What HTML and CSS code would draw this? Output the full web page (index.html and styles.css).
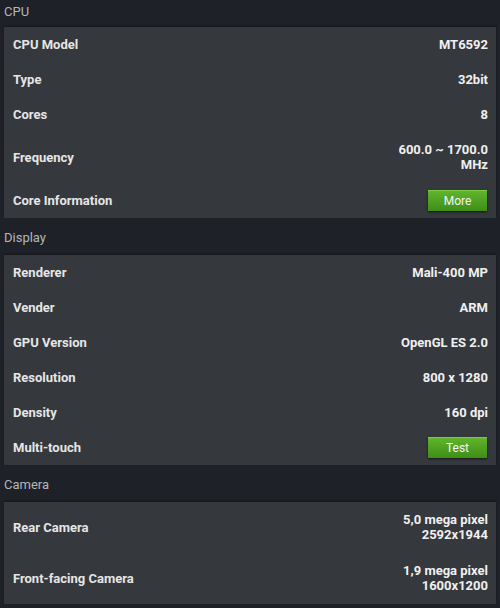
FILE: index.html
```html
<!DOCTYPE html>
<html>
<head>
<meta charset="utf-8">
<link rel="stylesheet" href="styles.css">
</head>
<body>
<div class="page">
  <div class="section-title first">CPU</div>
  <div class="card">
    <div class="row"><span class="label">CPU Model</span><span class="value">MT6592</span></div>
    <div class="row"><span class="label">Type</span><span class="value">32bit</span></div>
    <div class="row"><span class="label">Cores</span><span class="value">8</span></div>
    <div class="row tall"><span class="label">Frequency</span><span class="value">600.0 ~ 1700.0<br>MHz</span></div>
    <div class="row btnrow"><span class="label">Core Information</span><span class="btn">More</span></div>
  </div>
  <div class="section-title">Display</div>
  <div class="card">
    <div class="row"><span class="label">Renderer</span><span class="value">Mali-400 MP</span></div>
    <div class="row"><span class="label">Vender</span><span class="value">ARM</span></div>
    <div class="row"><span class="label">GPU Version</span><span class="value">OpenGL ES 2.0</span></div>
    <div class="row"><span class="label">Resolution</span><span class="value">800 x 1280</span></div>
    <div class="row"><span class="label">Density</span><span class="value">160 dpi</span></div>
    <div class="row"><span class="label">Multi-touch</span><span class="btn">Test</span></div>
  </div>
  <div class="section-title">Camera</div>
  <div class="card">
    <div class="row tall"><span class="label">Rear Camera</span><span class="value">5,0 mega pixel<br>2592x1944</span></div>
    <div class="row tall last"><span class="label">Front-facing Camera</span><span class="value">1,9 mega pixel<br>1600x1200</span></div>
  </div>
</div>
</body>
</html>
```
FILE: styles.css
```css
html, body {
  margin: 0;
  padding: 0;
  background: #1f2128;
  font-family: Roboto, "Noto Sans", sans-serif;
  width: 500px;
  height: 608px;
  overflow: hidden;
}
.page {
  display: flex;
  flex-direction: column;
}
.section-title {
  color: #b4b6b8;
  font-size: 13px;
  line-height: 16px;
  padding: 12px 4px 9px;
}
.section-title.first {
  padding-top: 4px;
  padding-bottom: 7px;
}
.card {
  margin: 0 4px;
  background: #35383c;
  box-shadow: 0 -1px 2px rgba(0,0,0,0.35);
  display: flex;
  flex-direction: column;
}
.row {
  height: 35px;
  display: flex;
  align-items: center;
  justify-content: space-between;
  padding: 0 8px 0 9px;
}
.row.tall {
  height: 50px;
}
.row.last {
  height: 52px;
}
.row.btnrow {
  height: 36px;
}
.label {
  color: #e6e6e6;
  font-weight: 700;
  font-size: 13px;
}
.value {
  color: #f0f0f0;
  font-weight: 700;
  font-size: 13px;
  line-height: 15.5px;
  text-align: right;
}
.btn {
  width: 59px;
  height: 21px;
  margin-right: 1px;
  box-sizing: border-box;
  background: linear-gradient(#5fb52b, #3f8e17);
  border-top: 1px solid #7ccc44;
  box-shadow: 0 1px 2px rgba(0,0,0,0.6);
  color: #f4f4f4;
  font-size: 12px;
  display: flex;
  align-items: center;
  justify-content: center;
}
```
